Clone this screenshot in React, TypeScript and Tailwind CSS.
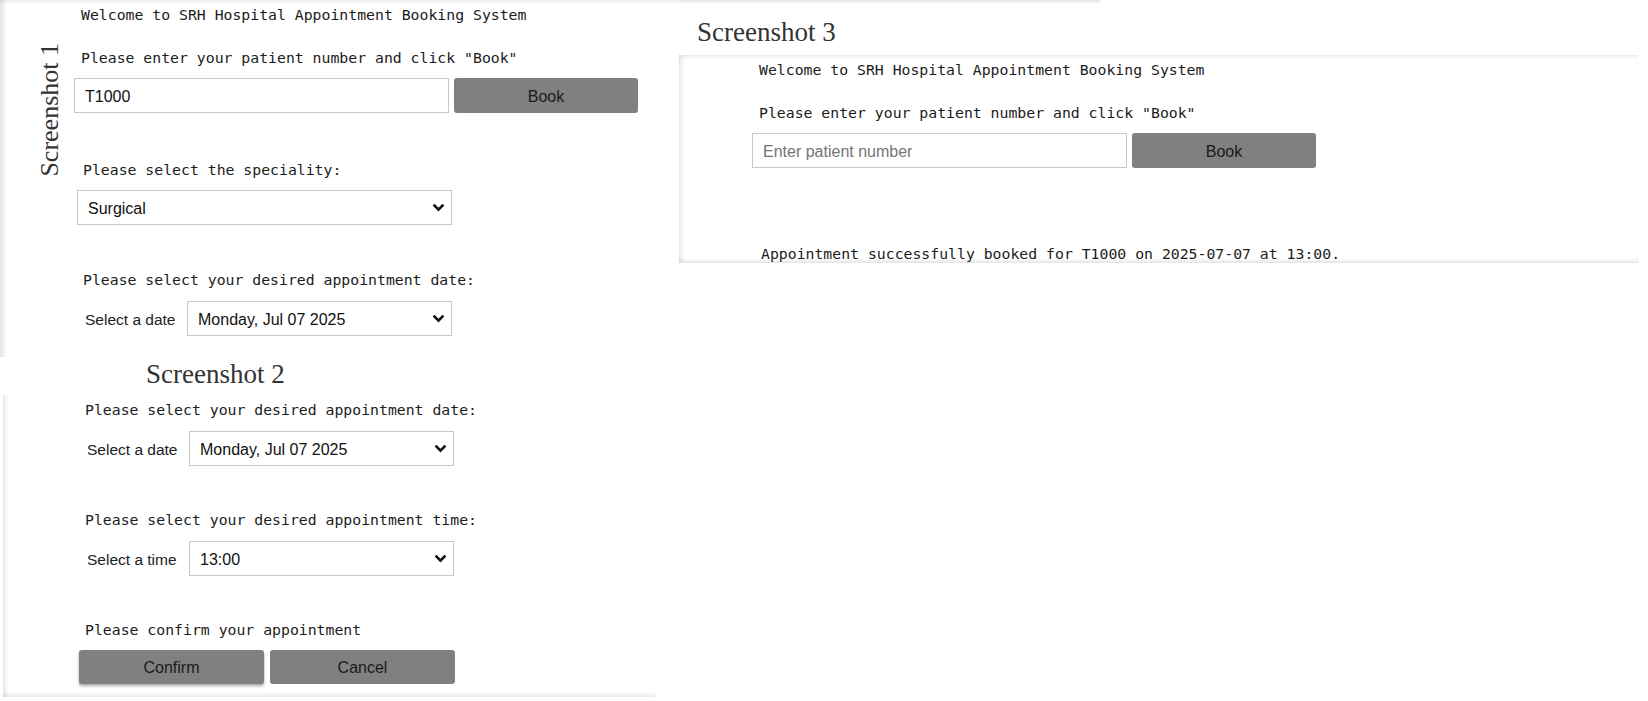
import React from "react";

const MONO =
  "font-['DejaVu_Sans_Mono','Liberation_Mono',monospace] text-[14.8px] leading-[20px] text-[#1c1c1c] whitespace-pre";
const SANS = "font-['Liberation_Sans',Arial,sans-serif]";
const SERIF = "font-['Liberation_Serif','Times_New_Roman',serif] text-[#333]";

function Chevron() {
  return (
    <svg width="13" height="9" viewBox="0 0 13 9" className="shrink-0">
      <path d="M1.6 1.6 L6.5 6.6 L11.4 1.6" fill="none" stroke="#111" strokeWidth="2.7" />
    </svg>
  );
}

function FakeSelect({ text, width }: { text: string; width: string }) {
  return (
    <div
      className={`${width} h-[35px] border border-[#c8c8c8] bg-white flex items-center justify-between pl-[10px] pr-[6px] ${SANS} text-[16px] text-[#111]`}
    >
      <span className="pt-[2px]">{text}</span>
      <Chevron />
    </div>
  );
}

function BookRow({ value, placeholder }: { value?: string; placeholder?: string }) {
  return (
    <div className="flex items-center h-[35px]">
      <input
        readOnly
        value={value ?? ""}
        placeholder={placeholder}
        className={`w-[375px] h-[35px] border border-[#c8c8c8] bg-white px-[10px] pt-[2px] outline-none ${SANS} text-[16px] text-[#111] placeholder:text-[#757575]`}
      />
      <button
        className={`ml-[5px] w-[184px] h-[35px] rounded-[3px] bg-[#808080] flex items-center justify-center pt-[2px] ${SANS} text-[16px] text-[#1a1a1a]`}
      >
        Book
      </button>
    </div>
  );
}

function LabeledSelect({ label, value }: { label: string; value: string }) {
  return (
    <div className="flex items-center">
      <span className={`w-[102px] pt-[2px] ${SANS} text-[15.5px] text-[#222]`}>{label}</span>
      <FakeSelect text={value} width="w-[265px]" />
    </div>
  );
}

export default function App() {
  return (
    <div className="w-[1648px] h-[701px] bg-white overflow-hidden flex">
      {/* Left column */}
      <div className="w-[679px] shrink-0 flex flex-col">
        {/* Screenshot 1 */}
        <div className="h-[357px] flex shadow-[inset_8px_0_6px_-5px_rgba(0,0,0,0.13),inset_0_4px_4px_-3px_rgba(0,0,0,0.12)]">
          <div className="w-[74px] shrink-0 pt-[43px] pl-[37px]">
            <div className={`[writing-mode:vertical-rl] rotate-180 ${SERIF} text-[26px] leading-[26px]`}>
              Screenshot 1
            </div>
          </div>
          <div className="flex flex-col pt-[5px]">
            <p className={`${MONO} pl-[7px]`}>Welcome to SRH Hospital Appointment Booking System</p>
            <p className={`${MONO} pl-[7px] mt-[23px]`}>Please enter your patient number and click "Book"</p>
            <div className="mt-[10px]">
              <BookRow value="T1000" />
            </div>
            <p className={`${MONO} pl-[9px] mt-[47px]`}>Please select the speciality:</p>
            <div className="mt-[10px] ml-[3px]">
              <FakeSelect text="Surgical" width="w-[375px]" />
            </div>
            <p className={`${MONO} pl-[9px] mt-[45px]`}>Please select your desired appointment date:</p>
            <div className="mt-[11px] ml-[11px]">
              <LabeledSelect label="Select a date" value="Monday, Jul 07 2025" />
            </div>
          </div>
        </div>

        {/* Screenshot 2 label */}
        <div className="h-[38px] pl-[146px]">
          <span className={`${SERIF} text-[27px] leading-[34px]`}>Screenshot 2</span>
        </div>

        {/* Screenshot 2 */}
        <div className="ml-[3px] w-[652px] h-[302px] flex flex-col pl-[74px] pt-[5px] shadow-[inset_6px_0_5px_-4px_rgba(0,0,0,0.12),inset_0_-5px_4px_-3px_rgba(0,0,0,0.1)]">
          <p className={`${MONO} pl-[8px]`}>Please select your desired appointment date:</p>
          <div className="mt-[11px] ml-[10px]">
            <LabeledSelect label="Select a date" value="Monday, Jul 07 2025" />
          </div>
          <p className={`${MONO} pl-[8px] mt-[44px]`}>Please select your desired appointment time:</p>
          <div className="mt-[11px] ml-[10px]">
            <LabeledSelect label="Select a time" value="13:00" />
          </div>
          <p className={`${MONO} pl-[8px] mt-[44px]`}>Please confirm your appointment</p>
          <div className="mt-[10px] ml-[2px] flex">
            <button
              className={`w-[185px] h-[34px] rounded-[3px] bg-[#808080] pt-[2px] shadow-[0_2px_3px_rgba(0,0,0,0.35)] ${SANS} text-[16px] text-[#1a1a1a]`}
            >
              Confirm
            </button>
            <button
              className={`ml-[6px] w-[185px] h-[34px] rounded-[3px] bg-[#808080] pt-[2px] ${SANS} text-[16px] text-[#1a1a1a]`}
            >
              Cancel
            </button>
          </div>
        </div>
      </div>

      {/* Right column */}
      <div className="flex-1 flex flex-col">
        <div className="w-[421px] h-[4px] bg-[linear-gradient(to_bottom,#e2e2e2,#ffffff)]" />
        <div className="h-[51px] pt-[11px] pl-[18px]">
          <span className={`${SERIF} text-[27px] leading-[34px]`}>Screenshot 3</span>
        </div>
        {/* Screenshot 3 */}
        <div className="w-[959px] h-[208px] flex flex-col pl-[73px] pt-[5px] shadow-[inset_6px_0_5px_-4px_rgba(0,0,0,0.12),inset_0_4px_4px_-3px_rgba(0,0,0,0.12),inset_0_-5px_4px_-3px_rgba(0,0,0,0.12)]">
          <p className={`${MONO} pl-[7px]`}>Welcome to SRH Hospital Appointment Booking System</p>
          <p className={`${MONO} pl-[7px] mt-[23px]`}>Please enter your patient number and click "Book"</p>
          <div className="mt-[10px]">
            <BookRow placeholder="Enter patient number" />
          </div>
          <p className={`${MONO} pl-[9px] mt-[76px] text-[14.7px]`}>
            Appointment successfully booked for T1000 on 2025-07-07 at 13:00.
          </p>
        </div>
      </div>
    </div>
  );
}
